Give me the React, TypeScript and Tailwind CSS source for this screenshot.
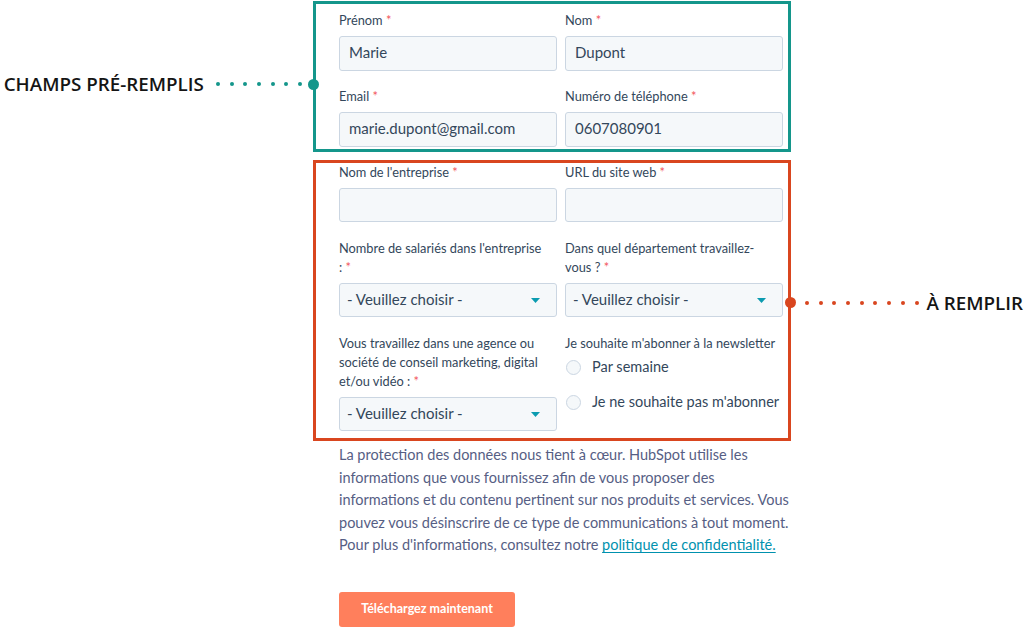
import type { ReactNode } from 'react'

const TEAL = '#14968b'
const RED = '#d9461f'

function Req() {
  return <span className="text-[#f2545b]"> *</span>
}

function Label({ children }: { children: ReactNode }) {
  return (
    <div className="mb-[6px] text-[12.8px] leading-[19px] font-normal text-[#33475b]">
      {children}
    </div>
  )
}

function TextInput({ value = '', h = 'h-[35px]' }: { value?: string; h?: string }) {
  return (
    <div
      className={`${h} flex items-center rounded-[3px] border border-[#cbd6e2] bg-[#f5f8fa] px-[9px] pb-[2px] text-[15px] text-[#33475b]`}
    >
      {value}
    </div>
  )
}

function Select() {
  return (
    <div className="flex h-[34px] items-center justify-between rounded-[3px] border border-[#cbd6e2] bg-[#f5f8fa] pr-[16px] pl-[7px] text-[15px] text-[#33475b]">
      <span className="pb-[2px]">- Veuillez choisir -</span>
      <svg width="9" height="5" viewBox="0 0 9 5">
        <path d="M0 0h9L4.5 5z" fill="#0b9bb0" />
      </svg>
    </div>
  )
}

function Radio({ label }: { label: string }) {
  return (
    <div className="flex h-[24px] items-center gap-[11px] text-[14.5px] text-[#33475b]">
      <span className="ml-px h-[15px] w-[15px] rounded-full border border-[#cbd6e2] bg-[#f5f8fa]" />
      <span>{label}</span>
    </div>
  )
}

function Dots({ count, color }: { count: number; color: string }) {
  return (
    <div className="flex items-center gap-[9.7px]">
      {Array.from({ length: count }).map((_, i) => (
        <span
          key={i}
          className="h-[4px] w-[4px] rounded-full"
          style={{ backgroundColor: color }}
        />
      ))}
    </div>
  )
}

export default function App() {
  return (
    <div
      className="min-h-[643px] w-[1024px] bg-white pt-px"
      style={{ fontFamily: 'Lato, "Noto Sans", sans-serif' }}
    >
      <div className="grid grid-cols-[313px_478px_1fr]">
        {/* prefilled callout */}
        <div className="flex items-start justify-end pt-[70px]">
          <span
            className="mr-[12px] text-[18.8px] leading-[26px] font-semibold text-[#151515]"
            style={{ fontFamily: '"Open Sans", sans-serif' }}
          >
            CHAMPS PRÉ-REMPLIS
          </span>
          <div className="flex h-[26px] items-center">
            <Dots count={7} color={TEAL} />
            <span
              className="relative z-10 -mr-[6px] ml-[6px] h-[11px] w-[11px] rounded-full"
              style={{ backgroundColor: TEAL }}
            />
          </div>
        </div>

        <div className="border-[3px] border-[#14968b] pt-[7px] pr-[5px] pb-[2px] pl-[23px]">
          <div className="grid grid-cols-2 gap-x-2 gap-y-[16px]">
            <div>
              <Label>
                Prénom<Req />
              </Label>
              <TextInput value="Marie" />
            </div>
            <div>
              <Label>
                Nom<Req />
              </Label>
              <TextInput value="Dupont" />
            </div>
            <div>
              <Label>
                Email<Req />
              </Label>
              <TextInput value="marie.dupont@gmail.com" />
            </div>
            <div>
              <Label>
                Numéro de téléphone<Req />
              </Label>
              <TextInput value="0607080901" />
            </div>
          </div>
        </div>
        <div />

        {/* to fill */}
        <div className="mt-2" />
        <div className="mt-2 border-[3px] border-[#d9461f] pt-0 pr-[5px] pb-[7px] pl-[23px]">
          <div className="grid grid-cols-2 gap-x-2 gap-y-[17px]">
            <div>
              <Label>
                Nom de l'entreprise<Req />
              </Label>
              <TextInput h="h-[34px]" />
            </div>
            <div>
              <Label>
                URL du site web<Req />
              </Label>
              <TextInput h="h-[34px]" />
            </div>
            <div>
              <Label>
                Nombre de salariés dans l'entreprise
                <br />:<Req />
              </Label>
              <Select />
            </div>
            <div>
              <Label>
                Dans quel département travaillez-
                <br />
                vous ?<Req />
              </Label>
              <Select />
            </div>
            <div>
              <Label>
                Vous travaillez dans une agence ou
                <br />
                société de conseil marketing, digital
                <br />
                et/ou vidéo : <Req />
              </Label>
              <Select />
            </div>
            <div>
              <div className="text-[12.8px] leading-[19px] text-[#33475b]">
                Je souhaite m'abonner à la newsletter
              </div>
              <div className="mt-[2px] flex flex-col gap-[11px]">
                <Radio label="Par semaine" />
                <Radio label="Je ne souhaite pas m'abonner" />
              </div>
            </div>
          </div>
        </div>
        <div className="mt-2 flex items-center pt-1">
          <span
            className="relative z-10 -ml-[6px] h-[11px] w-[11px] rounded-full"
            style={{ backgroundColor: RED }}
          />
          <div className="mr-[8px] ml-[9px]">
            <Dots count={9} color={RED} />
          </div>
          <span
            className="text-[18.8px] leading-[26px] font-semibold text-[#151515]"
            style={{ fontFamily: '"Open Sans", sans-serif' }}
          >
            À REMPLIR
          </span>
        </div>

        {/* legal text + button */}
        <div />
        <div className="pl-[26px]">
          <p className="mt-[3px] text-[14.5px] leading-[22.5px] whitespace-nowrap text-[#565e84]">
            La protection des données nous tient à cœur. HubSpot utilise les
            <br />
            informations que vous fournissez afin de vous proposer des
            <br />
            informations et du contenu pertinent sur nos produits et services. Vous
            <br />
            pouvez vous désinscrire de ce type de communications à tout moment.
            <br />
            Pour plus d'informations, consultez notre{' '}
            <a className="text-[#0091ae] underline underline-offset-2">
              politique de confidentialité.
            </a>
          </p>
          <button className="mt-[35px] flex h-[35px] w-[176px] items-center justify-center rounded-[3px] bg-[#ff7f5c] text-[12.5px] font-bold text-white">
            Téléchargez maintenant
          </button>
        </div>
        <div />
      </div>
    </div>
  )
}
